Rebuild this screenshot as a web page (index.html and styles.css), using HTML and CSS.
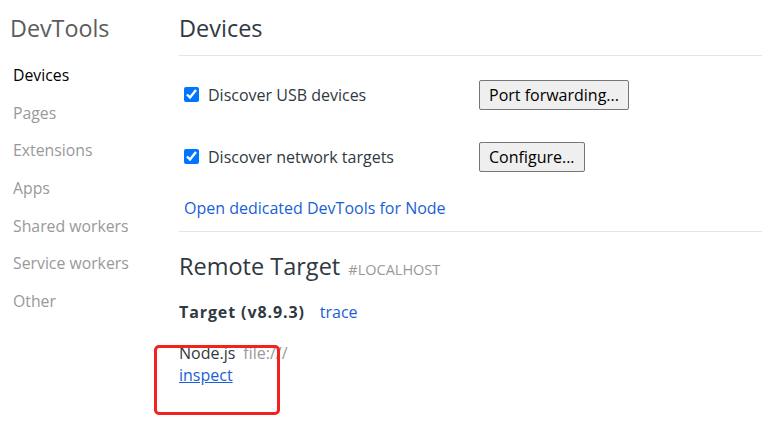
FILE: index.html
```html
<!DOCTYPE html>
<html>
<head>
<meta charset="utf-8">
<link rel="stylesheet" href="styles.css">
</head>
<body>
<div class="app">
  <nav class="sidebar">
    <div class="brand">DevTools</div>
    <ul class="nav">
      <li class="selected">Devices</li>
      <li>Pages</li>
      <li>Extensions</li>
      <li>Apps</li>
      <li>Shared workers</li>
      <li>Service workers</li>
      <li>Other</li>
    </ul>
  </nav>
  <main class="content">
    <h1 class="page-title">Devices</h1>
    <section class="config">
      <div class="row">
        <label class="check"><input type="checkbox" checked><span>Discover USB devices</span></label>
        <button class="btn">Port forwarding...</button>
      </div>
      <div class="row">
        <label class="check"><input type="checkbox" checked><span>Discover network targets</span></label>
        <button class="btn">Configure...</button>
      </div>
      <a class="node-link" href="#">Open dedicated DevTools for Node</a>
    </section>
    <section class="remote">
      <h2 class="remote-title">Remote Target <span class="host">#LOCALHOST</span></h2>
      <div class="target-row"><span class="target-name">Target (v8.9.3)</span><a class="action" href="#">trace</a></div>
      <div class="item">
        <div class="item-line"><span class="item-name">Node.js</span><span class="item-url">file:///</span></div>
        <a class="inspect" href="#">inspect</a>
      </div>
    </section>
  </main>
  <div class="annotation"></div>
</div>
</body>
</html>
```

FILE: styles.css
```css
html, body {
  margin: 0;
  padding: 0;
  background: #fff;
}
body {
  font-family: "Open Sans", "Noto Sans", sans-serif;
  font-size: 16px;
  color: #303942;
}
.app {
  position: relative;
  display: flex;
  width: 762px;
  height: 437px;
  overflow: hidden;
}
.sidebar {
  width: 179px;
  flex: none;
}
.brand {
  font-size: 23.3px;
  color: #5c5c5c;
  padding-left: 10px;
  height: 56px;
  line-height: 56px;
}
.nav {
  list-style: none;
  margin: 0;
  padding: 1px 0 0 13px;
}
.nav li {
  height: 37.7px;
  line-height: 37.7px;
  font-size: 15.8px;
  color: #999;
}
.nav li.selected {
  color: #000;
  line-height: 37px;
}
.content {
  flex: 1;
  min-width: 0;
}
.page-title {
  margin: 0;
  font-size: 23.5px;
  font-weight: normal;
  color: #303942;
  height: 55px;
  line-height: 56px;
  border-bottom: 1px solid #e6e6e6;
}
.config {
  padding: 23px 0 0 5px;
  border-bottom: 1px solid #e6e6e6;
  height: 152px;
}
.row {
  display: flex;
  align-items: center;
  height: 31px;
  margin-bottom: 31px;
}
.check {
  width: 295px;
  display: flex;
  align-items: center;
  gap: 9px;
}
.check input {
  margin: 0;
  width: 15px;
  height: 15px;
  accent-color: #0075ff;
}
.btn {
  font-family: inherit;
  font-size: 16px;
  color: #000;
  background: #efefef;
  border: 1px solid #767676;
  border-radius: 2px;
  height: 30px;
  padding: 0 9px;
}
.node-link {
  display: block;
  margin-top: -6px;
  color: #1a5fd6;
  text-decoration: none;
}
.remote-title {
  margin: 0;
  font-size: 23.5px;
  font-weight: normal;
  height: 69px;
  line-height: 69px;
}
.host {
  font-size: 14.5px;
  color: #999;
  margin-left: 2px;
}
.target-row {
  height: 22px;
  line-height: 22px;
  margin-bottom: 19px;
}
.target-name {
  font-weight: bold;
  letter-spacing: 0.9px;
  margin-right: 15px;
}
.action {
  color: #1a5fd6;
  text-decoration: none;
}
.item-line {
  line-height: 22px;
}
.item-url {
  color: #999;
  margin-left: 8px;
}
.inspect {
  display: inline-block;
  line-height: 22px;
  color: #1a5fd6;
  text-decoration: underline;
}
.annotation {
  position: absolute;
  left: 154px;
  top: 345px;
  width: 120px;
  height: 64px;
  border: 3px solid #f2231c;
  border-radius: 5px;
}
```
